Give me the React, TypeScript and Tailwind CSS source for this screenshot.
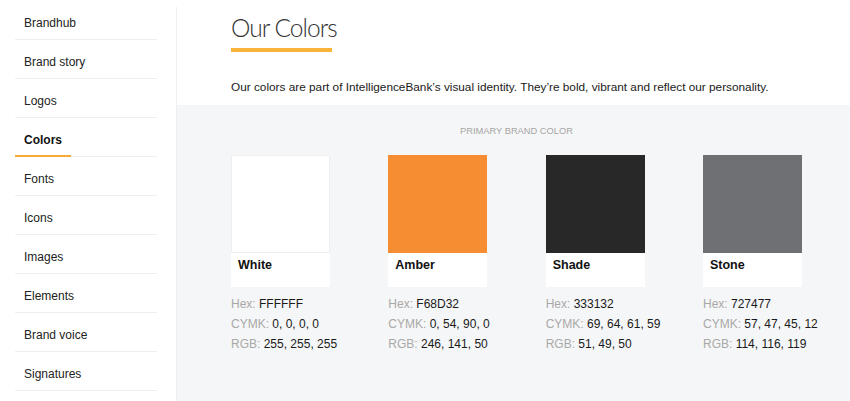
const navItems = [
  'Brandhub',
  'Brand story',
  'Logos',
  'Colors',
  'Fonts',
  'Icons',
  'Images',
  'Elements',
  'Brand voice',
  'Signatures',
];

type Swatch = {
  name: string;
  color: string;
  hex: string;
  cymk: string;
  rgb: string;
};

const swatches: Swatch[] = [
  { name: 'White', color: '#ffffff', hex: 'FFFFFF', cymk: '0, 0, 0, 0', rgb: '255, 255, 255' },
  { name: 'Amber', color: '#f68d32', hex: 'F68D32', cymk: '0, 54, 90, 0', rgb: '246, 141, 50' },
  { name: 'Shade', color: '#282828', hex: '333132', cymk: '69, 64, 61, 59', rgb: '51, 49, 50' },
  { name: 'Stone', color: '#6f7073', hex: '727477', cymk: '57, 47, 45, 12', rgb: '114, 116, 119' },
];

const ColorCard = ({ swatch }: { swatch: Swatch }) => {
  return (
    <div className="w-[99px]">
      <div
        className={
          swatch.name === 'White'
            ? 'h-[98px] border border-[#efefef] bg-white'
            : 'h-[98px]'
        }
        style={swatch.name === 'White' ? undefined : { backgroundColor: swatch.color }}
      />
      <div className="h-[34px] bg-white px-[7px] pt-[4px] text-[12.5px] font-bold leading-4 text-[#111]">
        {swatch.name}
      </div>
      {/* specs */}
      <div className="mt-[7px] flex flex-col text-[12px] leading-5 text-[#1a1a1a] whitespace-nowrap">
        <p><span className="text-[#a9a9a9]">Hex: </span>{swatch.hex}</p>
        <p><span className="text-[#a9a9a9]">CYMK: </span>{swatch.cymk}</p>
        <p><span className="text-[#a9a9a9]">RGB: </span>{swatch.rgb}</p>
      </div>
    </div>
  );
};

export default function App() {
  return (
    <div className="flex h-[401px] w-[850px] overflow-hidden bg-white font-['Liberation_Sans',Arial,sans-serif] text-[#222]">
      {/* Sidebar */}
      <nav className="w-[176px] shrink-0 pl-[15px] pr-[19px] pt-px">
        {navItems.map((item) => (
          <div
            key={item}
            className="relative h-[39px] border-b border-[#efefef] pl-[9px] pt-[14px] text-[12px] leading-4"
          >
            <span className={item === 'Colors' ? 'font-bold text-[#111]' : 'text-[#222]'}>{item}</span>
            {item === 'Colors' && (
              <div className="absolute -bottom-px left-0 h-[2px] w-[56px] bg-[#f6a935]" />
            )}
          </div>
        ))}
      </nav>

      {/* Main */}
      <main className="mt-[7px] flex flex-1 flex-col border-l border-[#eeeff0]">
        <header className="h-[98px] bg-white pl-[54px] pt-[7px]">
          <h1 className="font-['Lato','Liberation_Sans',sans-serif] text-[24.5px] font-light leading-7 tracking-[-0.04em] text-[#333]">Our Colors</h1>
          <div className="mt-[6px] h-[4px] w-[101px] bg-[#f9b23a]" />
          <p className="mt-[27px] text-[11.8px] leading-4 text-[#1a1a1a]">
            Our colors are part of IntelligenceBank’s visual identity. They’re bold, vibrant and reflect our personality.
          </p>
        </header>

        <section className="flex-1 bg-[#f5f6f7] pl-[54px] pt-[18px]">
          <div className="w-[571px]">
            <h2 className="text-center text-[9.3px] uppercase leading-4 text-[#a5a5a5]">Primary brand color</h2>
            <div className="mt-[16px] flex justify-between">
              {swatches.map((s) => (
                <ColorCard key={s.name} swatch={s} />
              ))}
            </div>
          </div>
        </section>
      </main>
    </div>
  );
}
